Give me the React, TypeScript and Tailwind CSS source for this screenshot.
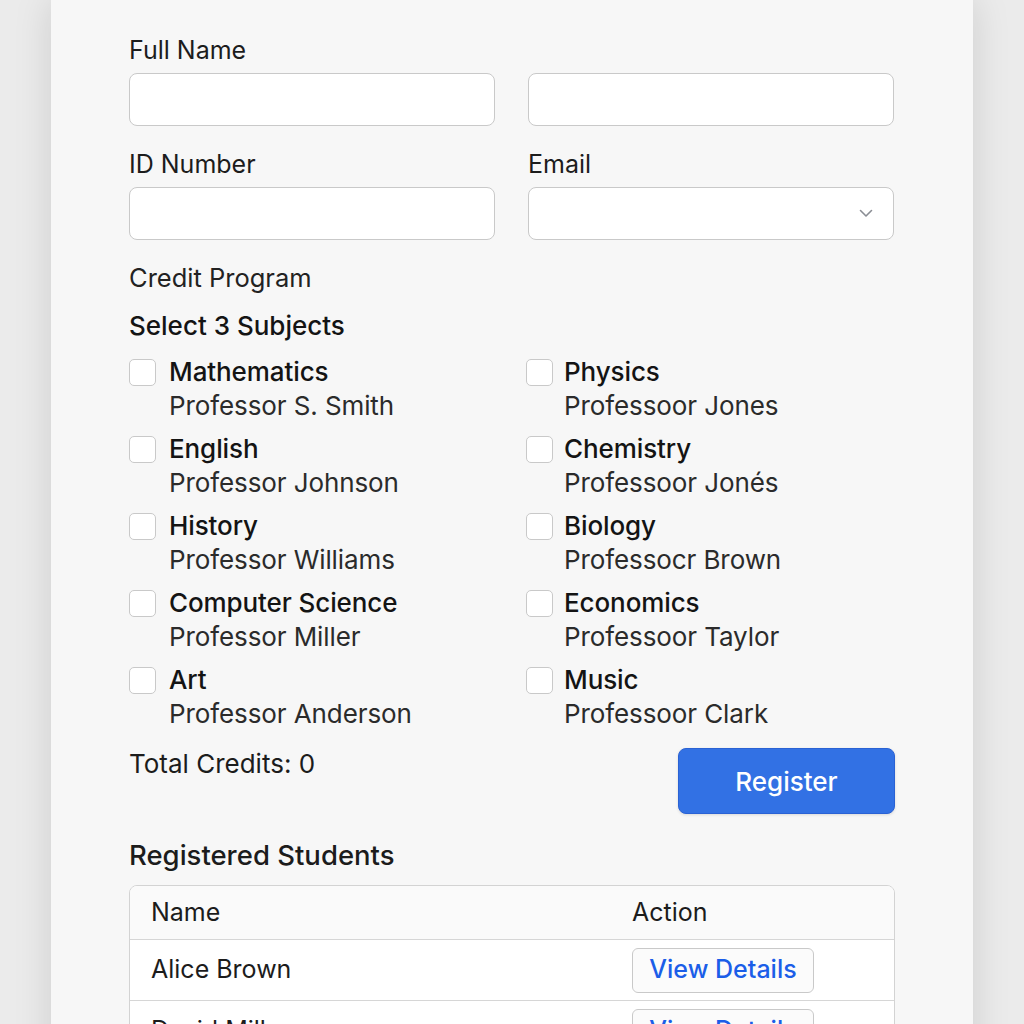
import React from "react";

const subjects: [string, string, string, string][] = [
  ["Mathematics", "Professor S. Smith", "Physics", "Professoor Jones"],
  ["English", "Professor Johnson", "Chemistry", "Professoor Jonés"],
  ["History", "Professor Williams", "Biology", "Professocr Brown"],
  ["Computer Science", "Professor Miller", "Economics", "Professoor Taylor"],
  ["Art", "Professor Anderson", "Music", "Professoor Clark"],
];

const students = ["Alice Brown", "David Miller", "Emma Wilson", "James Lee"];

function Subject({ title, prof, right }: { title: string; prof: string; right?: boolean }) {
  return (
    <label className={`flex items-start ${right ? "gap-[11px]" : "gap-[13px]"}`}>
      <span className="mt-[4px] h-[27px] w-[27px] shrink-0 rounded-[5px] border border-[#c9c9c9] bg-white" />
      <span className="flex flex-col">
        <span className="text-[26px] leading-[34px] font-medium text-[#141414] tracking-[-0.1px]">{title}</span>
        <span className="text-[26px] leading-[34px] text-[#2b2b2b] tracking-[-0.1px]">{prof}</span>
      </span>
    </label>
  );
}

export default function App() {
  return (
    <div
      className="min-h-screen w-full bg-[#ebebeb] text-[#1c1c1c]"
      style={{ fontFamily: "Inter, 'Noto Sans', sans-serif" }}
    >
      <div className="mx-auto w-[922px] bg-[#f7f7f7] px-[78px] pt-[34px] pb-10 shadow-[0_0_36px_rgba(0,0,0,0.13)]">
        <div className="grid grid-cols-[366px_366px] gap-x-[33px]">
          <div>
            <div className="text-[25px] leading-[32px] mb-[7px]">Full Name</div>
            <input className="h-[53px] w-full rounded-[8px] border border-[#c9c9c9] bg-white outline-none" />
          </div>
          <div>
            <div className="text-[25px] leading-[32px] mb-[7px]">&nbsp;</div>
            <input className="h-[53px] w-full rounded-[8px] border border-[#c9c9c9] bg-white outline-none" />
          </div>
          <div className="mt-[22px]">
            <div className="text-[25px] leading-[32px] mb-[7px]">ID Number</div>
            <input className="h-[53px] w-full rounded-[8px] border border-[#c9c9c9] bg-white outline-none" />
          </div>
          <div className="mt-[22px]">
            <div className="text-[25px] leading-[32px] mb-[7px]">Email</div>
            <div className="flex h-[53px] w-full items-center justify-end rounded-[8px] border border-[#c9c9c9] bg-white pr-[20px]">
              <svg width="14" height="9" viewBox="0 0 14 9" fill="none">
                <path d="M1.5 1.5 L7 7 L12.5 1.5" stroke="#8a8d94" strokeWidth="1.6" strokeLinecap="round" strokeLinejoin="round" />
              </svg>
            </div>
          </div>
        </div>

        <div className="mt-[22px] text-[25.5px] leading-[32px] text-[#222]">Credit Program</div>
        <div className="mt-[16px] text-[26px] leading-[32px] font-medium text-[#141414]">Select 3 Subjects</div>

        <div className="mt-[13px] flex flex-col gap-[9px]">
          {subjects.map(([t1, p1, t2, p2]) => (
            <div key={t1} className="grid grid-cols-[397px_1fr]">
              <Subject title={t1} prof={p1} />
              <Subject title={t2} prof={p2} right />
            </div>
          ))}
        </div>

        <div className="mt-[17px] flex items-start justify-between">
          <div className="text-[26px] leading-[32px] text-[#1c1c1c]">Total Credits: 0</div>
          <button className="h-[66px] w-[217px] rounded-[8px] border border-[#2a62d4] bg-[#3271e4] text-[26px] font-medium text-white shadow-[0_1px_3px_rgba(0,0,0,0.12)]">
            Register
          </button>
        </div>

        <div className="mt-[25px] text-[27.5px] leading-[32px] font-medium text-[#1c1c1c]">Registered Students</div>

        <div className="mt-[14px] overflow-hidden rounded-[8px] border border-[#d3d3d3] bg-white">
          <div className="flex h-[54px] items-center border-b border-[#d6d6d6] bg-[#fafafa] text-[25px]">
            <div className="w-[502px] pl-[21px]">Name</div>
            <div>Action</div>
          </div>
          {students.map((s, i) => (
            <div
              key={s}
              className={`flex h-[61px] items-center text-[25px] ${i < students.length - 1 ? "border-b border-[#d6d6d6]" : ""}`}
            >
              <div className="w-[502px] pl-[21px]">{s}</div>
              <button className="h-[45px] w-[182px] rounded-[6px] border border-[#c9c9c9] bg-[#fbfbfb] text-[25px] font-medium text-[#1b5ee8]">
                View Details
              </button>
            </div>
          ))}
        </div>
      </div>
    </div>
  );
}
